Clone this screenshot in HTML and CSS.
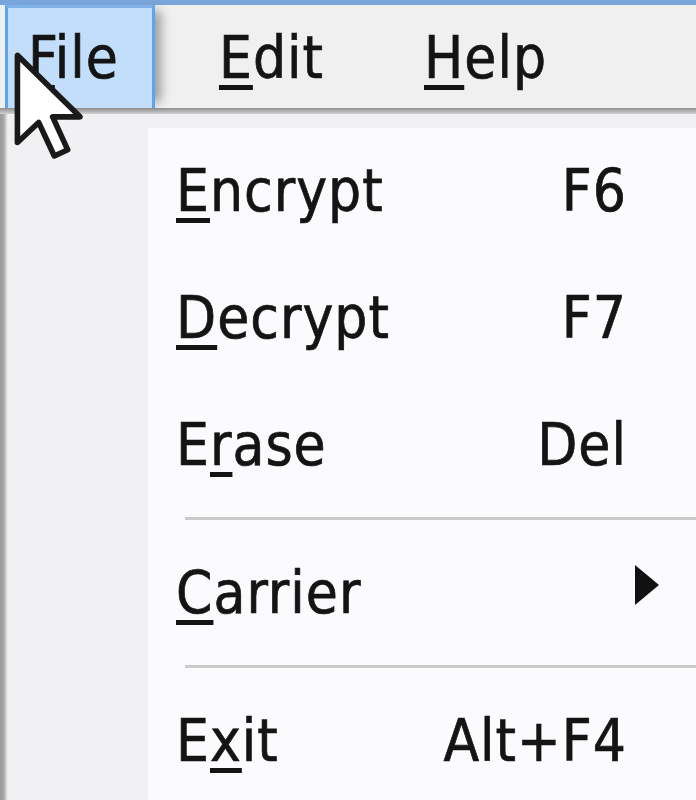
FILE: index.html
```html
<!DOCTYPE html>
<html lang="en">
<head>
  <meta charset="UTF-8">
  <meta name="viewport" content="width=device-width, initial-scale=1.0">
  <title>File menu</title>
  <link rel="stylesheet" href="styles.css">
</head>
<body>
  <div class="window">
    <div class="title-edge"></div>

    <nav class="menubar">
      <span class="menu-title open"><span class="key">F</span>ile</span>
      <span class="menu-title"><span class="key">E</span>dit</span>
      <span class="menu-title"><span class="key">H</span>elp</span>
    </nav>
    <div class="menubar-line"></div>

    <div class="dropdown">
      <div class="gutter"></div>
      <ul class="menu-items">
        <li class="item"><span class="label"><span class="key">E</span>ncrypt</span><span class="shortcut">F6</span><span></span></li>
        <li class="item"><span class="label"><span class="key">D</span>ecrypt</span><span class="shortcut">F7</span><span></span></li>
        <li class="item"><span class="label">E<span class="key">r</span>ase</span><span class="shortcut">Del</span><span></span></li>
        <li class="sep"></li>
        <li class="item"><span class="label"><span class="key">C</span>arrier</span><span class="shortcut"></span><span class="arrow"></span></li>
        <li class="sep"></li>
        <li class="item"><span class="label">E<span class="key">x</span>it</span><span class="shortcut">Alt+F4</span><span></span></li>
      </ul>
    </div>

    <!-- mouse pointer -->
    <svg class="cursor" width="70" height="109" viewBox="0 0 12.5 19.5">
      <polygon points="0.6,0.6 0.6,16.2 4.4,12.6 7.2,18.6 9.6,17.5 6.9,11.6 11.8,11.6"
               fill="#fff" stroke="#1a1a1a" stroke-width="1" stroke-linejoin="round"/>
    </svg>
  </div>
</body>
</html>
```

FILE: styles.css
```css
body {
  margin: 0;
  width: 696px;
  height: 800px;
  overflow: hidden;
  background-color: #f0f0f0;
  font-family: "DejaVu Sans Condensed", "DejaVu Sans", sans-serif;
  font-stretch: condensed;
  font-size: 58px;
  letter-spacing: 1px;
  color: #141414;
  -webkit-text-stroke: 0.7px #141414;
}
.window {
  position: relative;
  height: 800px;
}
.title-edge {
  height: 5px;
  background-color: #79a6db;
}

/* menu bar */
.menubar {
  display: flex;
  gap: 41px;
  height: 103px;
  background-color: #f0f0f0;
}
.menu-title {
  box-sizing: border-box;
  height: 103px;
  padding: 3px 33px 0 20px;
  line-height: 95px;
  border: 3px solid transparent;
  border-bottom: 0;
  white-space: nowrap;
}
.menu-title.open {
  margin-left: 5px;
  background-color: #c2defa;
  border-color: #5aa4f0;
  border-top-color: #7fb2e6;
  box-shadow: 12px 0 10px -6px rgba(0, 0, 0, 0.35);
}
.menubar-line {
  height: 6px;
  background: linear-gradient(#8f8f8f, #d2d2d2);
}
.key {
  text-decoration: underline;
  text-decoration-thickness: 5px;
  text-underline-offset: 7px;
}

/* drop-down */
.dropdown {
  display: flex;
  height: 686px;
  background-color: #f1f1f3;
}
.gutter {
  width: 148px;
  flex-shrink: 0;
  background: linear-gradient(to right, #9a9a9a 0, #a8a8a8 4px, #d4d4d4 6px, #f1f1f3 8px);
}
.menu-items {
  flex: 1;
  list-style: none;
  margin: 14px 0 0 0;
  padding: 0;
  background-color: #fbfbfd;
}
.item {
  display: grid;
  grid-template-columns: 1fr auto 69px;
  height: 127px;
  line-height: 127px;
  padding-left: 28px;
  white-space: nowrap;
}
.shortcut {
  text-align: right;
}
.arrow {
  width: 0;
  height: 0;
  margin: 35px 0 0 8px;
  border-left: 24px solid #111;
  border-top: 20px solid transparent;
  border-bottom: 20px solid transparent;
}
.sep {
  height: 3px;
  margin: 8px 0 10px 37px;
  background-color: #cbcbcb;
}

.cursor {
  position: absolute;
  left: 14px;
  top: 52px;
}
```
